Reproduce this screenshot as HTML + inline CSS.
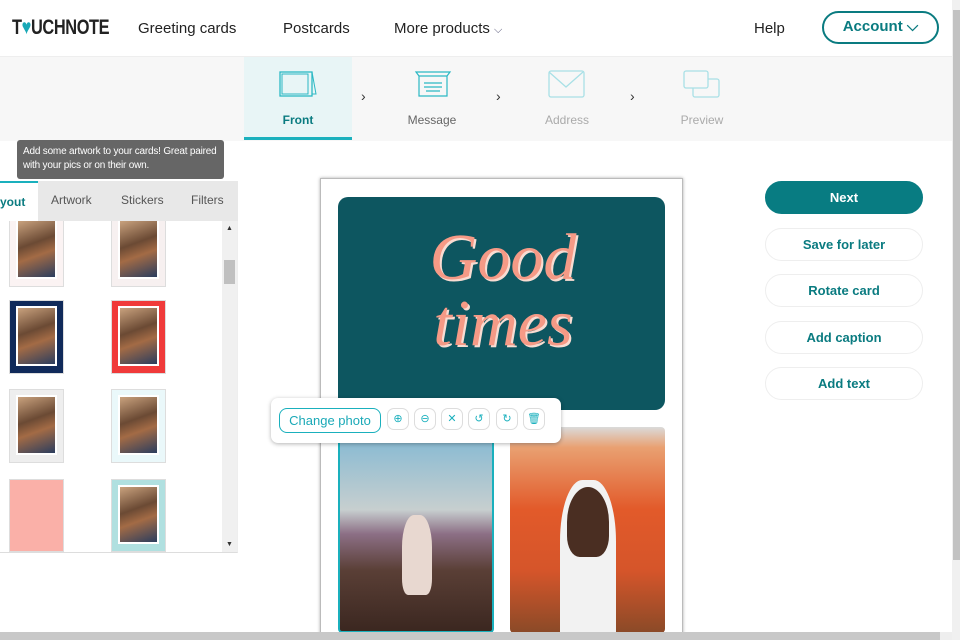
<!DOCTYPE html>
<html><head><meta charset="utf-8"><style>
*{box-sizing:border-box;margin:0;padding:0}
body{width:960px;height:640px;overflow:hidden;background:#fff;font-family:"Liberation Sans",sans-serif;position:relative;color:#222}
.abs{position:absolute}
.nav{font-size:15px;color:#222;top:20px}
.step{text-align:center;font-size:12px;color:#999}
.btn{position:absolute;left:765px;width:158px;height:33px;border-radius:17px;border:1px solid #eee;color:#0a7b80;font-weight:bold;font-size:13px;text-align:center;line-height:31px;background:#fff}
.thumb{position:absolute;width:55px;height:74px;border:1px solid #ddd}
.thumb i{position:absolute;left:6px;top:5px;right:6px;bottom:7px;background:linear-gradient(160deg,#c9a27e,#6b4a34 40%,#a36b45 60%,#2b3d5e);border:2px solid #fff}
.tb{position:absolute;top:408px;width:22px;height:22px;border:1px solid #ddd;border-radius:7px;color:#1ab0bd;font-size:11px;text-align:center;line-height:20px}
</style></head><body>
<!-- header -->
<div class="abs" style="left:12px;top:16px;font-size:21px;font-weight:bold;color:#222;font-family:'Liberation Sans',sans-serif;transform:scaleX(0.78);transform-origin:0 0;white-space:nowrap;letter-spacing:-0.5px">T<span style="color:#1aa9b7">♥</span>UCHNOTE</div>
<div class="abs nav" style="left:138px">Greeting cards</div>
<div class="abs nav" style="left:283px">Postcards</div>
<div class="abs nav" style="left:394px">More products <span style="color:#557;font-size:11px">⌵</span></div>
<div class="abs nav" style="left:754px">Help</div>
<div class="abs" style="left:822px;top:11px;width:117px;height:33px;border:2px solid #0a7b80;border-radius:17px;color:#0a7b80;font-weight:bold;font-size:15px;text-align:center;line-height:28px">Account ⌵</div>
<!-- steps bar -->
<div class="abs" style="left:0;top:56px;width:952px;height:85px;background:#f7f7f7;border-top:1px solid #eee"></div>
<div class="abs" style="left:244px;top:57px;width:108px;height:83px;background:#e8f5f6;border-bottom:3px solid #1ab0bd"></div>
<svg class="abs" style="left:278px;top:70px" width="40" height="28"><rect x="2" y="2" width="32" height="24" fill="none" stroke="#2bb8c4" stroke-width="1.3"/><rect x="4" y="4" width="26" height="20" fill="none" stroke="#2bb8c4"/><path d="M34 2l4 22h-4" fill="none" stroke="#2bb8c4"/></svg>
<svg class="abs" style="left:414px;top:70px" width="38" height="28"><path d="M2 2h34l-3 4H5z M5 6v20h28V6 M10 13h18M10 17h18M12 21h14" fill="none" stroke="#2bb8c4" stroke-width="1.2"/></svg>
<svg class="abs" style="left:548px;top:70px" width="38" height="28"><rect x="1" y="1" width="35" height="26" rx="2" fill="none" stroke="#a8e0e6" stroke-width="1.3"/><path d="M1 2l17 15 17-15" fill="none" stroke="#a8e0e6" stroke-width="1.3"/></svg>
<svg class="abs" style="left:683px;top:70px" width="38" height="28"><rect x="1" y="1" width="24" height="17" rx="2" fill="none" stroke="#a8e0e6" stroke-width="1.3"/><path d="M25 9h9a2 2 0 0 1 2 2v14a2 2 0 0 1-2 2H12a2 2 0 0 1-2-2v-7" fill="none" stroke="#a8e0e6" stroke-width="1.3"/></svg>
<div class="abs step" style="left:244px;top:113px;width:108px;color:#0a7b80;font-weight:bold">Front</div>
<div class="abs step" style="left:380px;top:113px;width:104px;color:#666">Message</div>
<div class="abs step" style="left:515px;top:113px;width:104px;color:#aaa">Address</div>
<div class="abs step" style="left:650px;top:113px;width:104px;color:#aaa">Preview</div>
<div class="abs" style="left:361px;top:88px;color:#333;font-size:14px">›</div>
<div class="abs" style="left:496px;top:88px;color:#333;font-size:14px">›</div>
<div class="abs" style="left:630px;top:88px;color:#333;font-size:14px">›</div>
<!-- left panel -->
<div class="abs" style="left:17px;top:140px;width:207px;height:39px;background:#666;border-radius:3px;color:#fff;font-size:10px;padding:5px 6px;line-height:14px;letter-spacing:-0.2px">Add some artwork to your cards! Great paired with your pics or on their own.</div>
<div class="abs" style="left:0;top:181px;width:238px;height:40px;background:#e8e8e8"></div>
<div class="abs" style="left:0;top:181px;width:38px;height:40px;background:#fff;border-top:2px solid #1ab0bd;color:#0a7b80;font-weight:bold;font-size:12px;line-height:38px">yout</div>
<div class="abs" style="left:51px;top:193px;font-size:12px;color:#555">Artwork</div>
<div class="abs" style="left:121px;top:193px;font-size:12px;color:#555">Stickers</div>
<div class="abs" style="left:191px;top:193px;font-size:12px;color:#555">Filters</div>
<div class="abs" style="left:0;top:221px;width:238px;height:332px;border-bottom:1px solid #ddd;border-right:1px solid #eee;overflow:hidden">
<div class="abs" style="left:222px;top:0;width:15px;height:332px;background:#f0f0f0"></div>
<div class="abs" style="left:224px;top:39px;width:11px;height:24px;background:#c0c0c0"></div>
<div class="abs" style="left:226px;top:4px;font-size:7px;color:#333">▲</div>
<div class="abs" style="left:226px;top:320px;font-size:7px;color:#333">▼</div>
<div class="thumb" style="left:9px;top:-8px;background:#fbf3f3"><i></i></div>
<div class="thumb" style="left:111px;top:-8px;background:#f7f0f0"><i></i></div>
<div class="thumb" style="left:9px;top:79px;background:#102a5a"><i></i></div>
<div class="thumb" style="left:111px;top:79px;background:#f03a3a"><i></i></div>
<div class="thumb" style="left:9px;top:168px;background:#eee"><i></i></div>
<div class="thumb" style="left:111px;top:168px;background:#eaf8fa"><i></i></div>
<div class="thumb" style="left:9px;top:258px;background:#fab0a8;height:73px"></div>
<div class="thumb" style="left:111px;top:258px;background:#b0e0e0;height:73px"><i></i></div>
</div>
<!-- card -->
<div class="abs" style="left:320px;top:178px;width:363px;height:462px;background:#fff;border:1px solid #bbb;border-bottom:none;box-shadow:0 0 3px #aaa"></div>
<div class="abs" style="left:338px;top:197px;width:327px;height:213px;background:#0d5660;border-radius:10px;overflow:hidden">
<div class="abs" style="left:70px;top:28px;font-family:'Liberation Serif',serif;font-style:italic;font-size:66px;line-height:66px;color:#f59a86;text-shadow:2px 2px 0 #f9dcd2;text-align:center;width:190px">Good<br>times</div>
</div>
<div class="abs" style="left:338px;top:427px;width:156px;height:206px;border:2px solid #1ab0bd;border-radius:4px;background:linear-gradient(180deg,#7fb7d3 0%,#c7cfcf 40%,#8c6f85 52%,#5a3f36 70%,#3b2720 100%)"></div>
<div class="abs" style="left:402px;top:515px;width:30px;height:80px;background:#e8d8d0;border-radius:40% 40% 20% 20%"></div>
<div class="abs" style="left:510px;top:427px;width:155px;height:206px;border-radius:4px;background:linear-gradient(180deg,#dadada 0%,#e9a071 10%,#e25a2a 40%,#d5552a 70%,#8a4a28 100%)"></div>
<div class="abs" style="left:560px;top:480px;width:56px;height:153px;background:#f2f2f2;border-radius:40% 40% 0 0"></div>
<div class="abs" style="left:567px;top:487px;width:42px;height:70px;background:#4a2e22;border-radius:50% 50% 30% 30%"></div>
<!-- photo toolbar -->
<div class="abs" style="left:271px;top:398px;width:290px;height:45px;background:#fff;border-radius:7px;box-shadow:0 1px 4px rgba(0,0,0,.3)"></div>
<div class="abs" style="left:279px;top:408px;width:102px;height:25px;border:1px solid #1ab0bd;border-radius:8px;color:#1aa9b7;font-size:13px;text-align:center;line-height:23px">Change photo</div>
<div class="tb" style="left:387px">⊕</div>
<div class="tb" style="left:414px">⊖</div>
<div class="tb" style="left:441px">✕</div>
<div class="tb" style="left:468px">↺</div>
<div class="tb" style="left:496px">↻</div>
<div class="tb" style="left:523px">🗑</div>
<!-- right buttons -->
<div class="btn" style="top:181px;background:#087c82;color:#fff;border-color:#087c82">Next</div>
<div class="btn" style="top:228px">Save for later</div>
<div class="btn" style="top:274px">Rotate card</div>
<div class="btn" style="top:321px">Add caption</div>
<div class="btn" style="top:367px">Add text</div>
<!-- scrollbars -->
<div class="abs" style="left:952px;top:0;width:8px;height:640px;background:#f0f0f0"></div>
<div class="abs" style="left:953px;top:10px;width:7px;height:550px;background:#c2c2c2"></div>
<div class="abs" style="left:0;top:632px;width:952px;height:8px;background:#c8c8c8"></div>
<div class="abs" style="left:940px;top:632px;width:12px;height:8px;background:#eee"></div>
</body></html>
